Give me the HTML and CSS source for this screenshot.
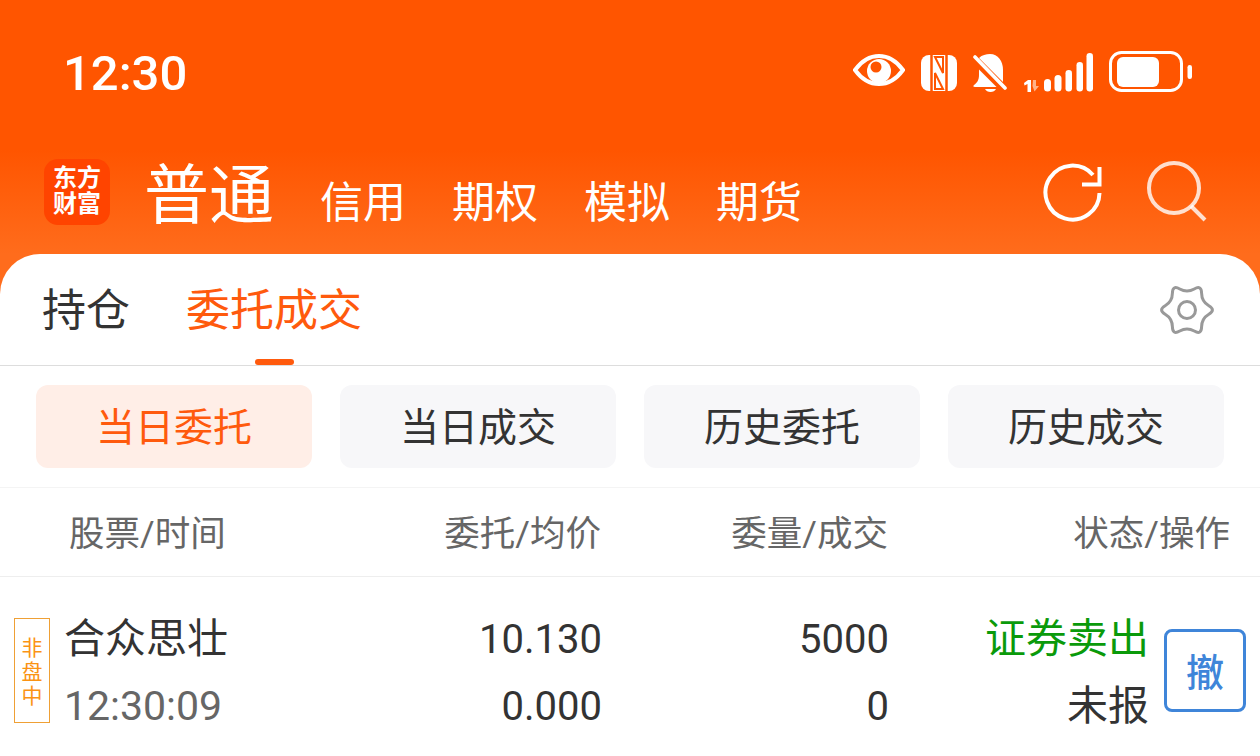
FILE: index.html
```html
<!DOCTYPE html>
<html lang="zh">
<head>
    <meta charset="UTF-8">
    <meta name="viewport" content="width=device-width, initial-scale=1.0">
    <title>东方财富 委托成交</title>
    <link rel="stylesheet" href="styles.css">
</head>
<body>
    <header class="top">
        <div class="status-bar">
            <span class="time">12:30</span>
            <div class="status-icons">
                <svg class="ic-eye" width="52" height="34" viewBox="0 0 52 34">
                    <path d="M2 17C10 6 18 3 26 3s16 3 24 14c-8 11-16 14-24 14S10 28 2 17z" fill="none" stroke="#fff" stroke-width="4"/>
                    <circle cx="26" cy="18" r="12" fill="#fff"/>
                    <circle cx="23" cy="14" r="5.500" fill="#ff5500"/>
                </svg>
                <svg class="ic-nfc" width="36" height="38" viewBox="0 0 36 38">
                    <rect y="1" width="36" height="36" rx="8" fill="#fff"/>
                    <path d="M10.500 1V37M25.500 1V37" stroke="#ff5500" stroke-width="2.500"/>
                    <path d="M14 19L22 35H14ZM22 19L14 3H22Z" fill="none" stroke="#ff5500" stroke-width="2"/>
                </svg>
                <svg class="ic-bell" width="36" height="38" viewBox="0 0 36 38">
                    <path d="M6 4C9 1 13 0 17 0C25 0 30 7 30 16V28Z" fill="#fff"/>
                    <path d="M6 15.500V21C6 26 4 29 1 31C0 32 0 33 2 33H23.500Z" fill="#fff"/>
                    <path d="M12 35H23C22 37 20 38 17.500 38S13 37 12 35Z" fill="#fff"/>
                    <path d="M2 3L32 34" stroke="#fff" stroke-width="3.600" stroke-linecap="round"/>
                </svg>
                <svg class="ic-signal" width="70" height="40" viewBox="0 0 70 40">
                    <path d="M1 31l4-3h3v12H4.500v-8l-3 1.500z" fill="#fff"/>
                    <path d="M10 28h3v6h3l-4.500 5.500L9.500 34z" fill="#ffb38a"/>
                    <rect x="21" y="27" width="7" height="12.500" rx="3.500" fill="#fff"/>
                    <rect x="31.500" y="23" width="7" height="16.500" rx="3.500" fill="#fff"/>
                    <rect x="42.500" y="18" width="6.500" height="21.500" rx="3.200" fill="#fff"/>
                    <rect x="53.500" y="10" width="6.500" height="29.500" rx="3.200" fill="#fff"/>
                    <rect x="63.500" y="1" width="6.500" height="38.500" rx="3.200" fill="#fff"/>
                </svg>
                <svg class="ic-battery" width="84" height="42" viewBox="0 0 84 42">
                    <rect x="2.500" y="1.500" width="71" height="38" rx="11" fill="none" stroke="#fff" stroke-width="3"/>
                    <rect x="9" y="6" width="42" height="30" rx="6" fill="#fff"/>
                    <rect x="79.500" y="14" width="4.500" height="14" rx="2.200" fill="#fff"/>
                </svg>
            </div>
        </div>
        <div class="app-bar">
            <div class="logo">东方<br>财富</div>
            <nav class="account-tabs">
                <a class="account-tab active" href="#">普通</a>
                <a class="account-tab" href="#">信用</a>
                <a class="account-tab" href="#">期权</a>
                <a class="account-tab" href="#">模拟</a>
                <a class="account-tab" href="#">期货</a>
            </nav>
            <svg class="ic-refresh" width="60" height="60" viewBox="0 0 60 60">
                <path d="M50 13A27 27 0 1 0 56.500 31" fill="none" stroke="#fff" stroke-width="4"/>
                <path d="M39 22.500h17.500V5" fill="none" stroke="#fff" stroke-width="4"/>
            </svg>
            <svg class="ic-search" width="62" height="62" viewBox="0 0 62 62">
                <circle cx="28" cy="27" r="25" fill="none" stroke="#fff" stroke-opacity=".8" stroke-width="4"/>
                <path d="M45 45l14 14" stroke="#fff" stroke-opacity=".8" stroke-width="4"/>
            </svg>
        </div>
    </header>
    <main class="sheet">
        <div class="main-tabs">
            <a class="main-tab" href="#">持仓</a>
            <a class="main-tab active" href="#">委托成交</a>
            <svg class="ic-gear" width="54" height="54" viewBox="-27 -27 54 54">
                <path d="M21.850 -4.250Q29 0 21.850 4.250Q14.700 8.500 14.600 16.800Q14.500 25.100 7.250 21.050Q0 17 -7.250 21.050Q-14.500 25.100 -14.600 16.800Q-14.700 8.500 -21.850 4.250Q-29 0 -21.850 -4.250Q-14.700 -8.500 -14.600 -16.800Q-14.500 -25.100 -7.250 -21.050Q0 -17 7.250 -21.050Q14.500 -25.100 14.600 -16.800Q14.700 -8.500 21.850 -4.250Z" fill="none" stroke="#999" stroke-width="3"/>
                <circle r="8.500" fill="none" stroke="#999" stroke-width="3"/>
            </svg>
        </div>
        <div class="filters">
            <a class="filter active" href="#">当日委托</a>
            <a class="filter" href="#">当日成交</a>
            <a class="filter" href="#">历史委托</a>
            <a class="filter" href="#">历史成交</a>
        </div>
        <div class="table-head">
            <span class="col-stock">股票/时间</span>
            <span class="col-price">委托/均价</span>
            <span class="col-qty">委量/成交</span>
            <span class="col-state">状态/操作</span>
        </div>
        <div class="order">
            <div class="badge">非盘中</div>
            <div class="cell col-name">
                <span class="strong">合众思壮</span>
                <span class="muted">12:30:09</span>
            </div>
            <div class="cell col-price">
                <span class="num">10.130</span>
                <span class="num">0.000</span>
            </div>
            <div class="cell col-qty">
                <span class="num">5000</span>
                <span class="num">0</span>
            </div>
            <div class="cell col-side">
                <span class="strong sell">证券卖出</span>
                <span class="strong">未报</span>
            </div>
            <button class="cancel">撤</button>
        </div>
    </main>
</body>
</html>
```

FILE: styles.css
```css
/* 基础样式 */
* {
    box-sizing: border-box;
}

html, body {
    height: 100%;
}

body {
    margin: 0;
    height: 756px;
    overflow: hidden;
    font-family: Roboto, "Noto Sans CJK SC", sans-serif;
    background: linear-gradient(#ff5500 0, #ff5500 150px, #ff6c1c 254px);
    color: #333;
}

a {
    text-decoration: none;
    color: inherit;
}

svg {
    display: block;
    flex: none;
}

/* 顶部 */
.top {
    height: 254px;
    color: #fff;
}

.status-bar {
    height: 150px;
    padding: 43px 68px 0 63px;
    display: flex;
    justify-content: space-between;
    align-items: flex-start;
}

.time {
    font-size: 49px;
    font-weight: 500;
    line-height: 62px;
}

.status-icons {
    display: flex;
    align-items: flex-start;
    margin-top: 8px;
}

.ic-eye {
    margin: 2px 16px 0 0;
}

.ic-nfc {
    margin: 3px 16px 0 0;
}

.ic-bell {
    margin: 3px 14px 0 0;
}

.ic-signal {
    margin: 1px 15px 0 0;
}

.app-bar {
    height: 104px;
    padding: 9px 52px 0 44px;
    display: flex;
    align-items: flex-start;
}

.logo {
    width: 66px;
    height: 66px;
    margin-right: 34px;
    border-radius: 14px;
    background: #ff4400;
    text-align: center;
    font-size: 24px;
    line-height: 26px;
    font-weight: 700;
    padding-top: 6px;
}

.account-tabs {
    display: flex;
    align-items: baseline;
    gap: 46px;
    flex: 1;
    margin-top: -5px;
}

.account-tab {
    font-size: 43px;
    line-height: 84px;
}

.account-tab.active {
    font-size: 65px;
}

.ic-refresh {
    margin: 3px 43px 0 0;
}

.ic-search {
    margin: 2px 0 0;
}

/* 内容 */
.sheet {
    background: #fff;
    border-radius: 40px 40px 0 0;
    height: 502px;
}

.main-tabs {
    height: 112px;
    padding: 0 46px 0 42px;
    display: flex;
    align-items: center;
    gap: 56px;
    border-bottom: 1px solid #ddd;
}

.main-tab {
    position: relative;
    font-size: 44px;
    line-height: 107px;
    padding-top: 4px;
    color: #333;
}

.main-tab.active {
    color: #ff5a0d;
}

.main-tab.active::after {
    content: "";
    position: absolute;
    left: 69px;
    bottom: 0;
    width: 39px;
    height: 6px;
    border-radius: 3px;
    background: #ff5a0d;
}

.ic-gear {
    margin-left: auto;
}

.filters {
    height: 122px;
    padding: 19px 36px;
    display: grid;
    grid-template-columns: repeat(4, 1fr);
    gap: 28px;
    border-bottom: 1px solid #f4f4f4;
}

.filter {
    height: 83px;
    padding-top: 2px;
    border-radius: 12px;
    background: #f7f7f9;
    font-size: 39px;
    line-height: 83px;
    text-align: center;
    color: #333;
}

.filter.active {
    background: #ffeee7;
    color: #ff5a0d;
}

.table-head {
    height: 89px;
    padding: 0 30px 4px 69px;
    display: flex;
    align-items: center;
    border-bottom: 1px solid #eee;
    font-size: 35.500px;
    color: #666;
    white-space: nowrap;
}

.col-stock {
    width: 156px;
}

.table-head .col-price {
    width: 376px;
    text-align: right;
}

.table-head .col-qty {
    width: 287px;
    text-align: right;
}

.table-head .col-state {
    flex: 1;
    text-align: right;
}

.order {
    padding: 41px 14px 0;
    display: flex;
    align-items: flex-start;
}

.badge {
    width: 36px;
    height: 105px;
    border: 1px solid #efa035;
    color: #fb9314;
    font-size: 21px;
    line-height: 24px;
    text-align: center;
    padding-top: 17px;
}

.cell {
    display: flex;
    flex-direction: column;
    text-align: right;
    margin-top: -12px;
}

.strong {
    font-size: 41px;
    line-height: 67px;
    color: #333;
}

.num {
    font-size: 40px;
    line-height: 67px;
    color: #333;
}

.muted {
    font-size: 41px;
    line-height: 67px;
    color: #666;
}

.col-name {
    width: 156px;
    margin-left: 14px;
    text-align: left;
    white-space: nowrap;
}

.cell.col-price {
    width: 382px;
}

.cell.col-qty {
    width: 287px;
}

.cell.col-side {
    width: 260px;
}

.strong.sell {
    color: #0a9a0a;
}

.cancel {
    width: 82px;
    height: 83px;
    margin: 11px 0 0 15px;
    border: 3px solid #3f85d9;
    border-radius: 8px;
    background: #fff;
    color: #3f85d9;
    font-family: inherit;
    font-size: 38px;
    font-weight: 500;
    padding: 0 0 3px;
}
```
